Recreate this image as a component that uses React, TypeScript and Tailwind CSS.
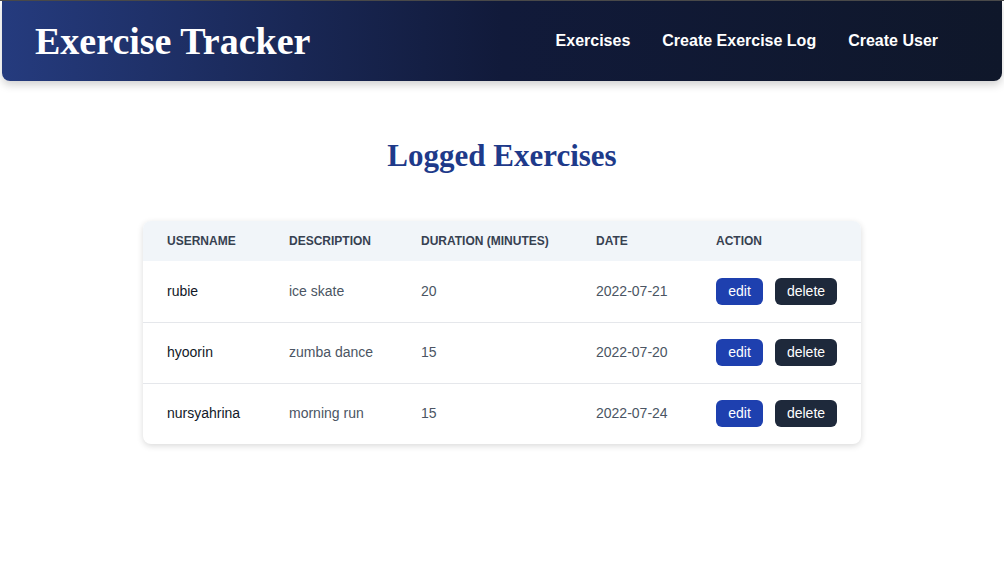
const exercises = [
  { username: "rubie", description: "ice skate", duration: 20, date: "2022-07-21" },
  { username: "hyoorin", description: "zumba dance", duration: 15, date: "2022-07-20" },
  { username: "nursyahrina", description: "morning run", duration: 15, date: "2022-07-24" },
];

const columns = [
  { label: "Username", w: "w-[122px]" },
  { label: "Description", w: "w-[132px]" },
  { label: "Duration (minutes)", w: "w-[175px]" },
  { label: "Date", w: "w-[120px]" },
  { label: "Action", w: "w-[169px]" },
];

const Navbar = () => (
  <nav className="mx-[2px] flex h-[80px] items-center justify-between rounded-b-lg bg-gradient-to-r from-[#253b7e] via-[#111a3a] to-[#0f172a] pl-[33px] pr-[64px] shadow-[0_4px_8px_rgba(0,0,0,0.18)]">
    <h1 className="text-[38px] font-bold leading-none text-white" style={{ fontFamily: "'Liberation Serif', serif" }}>
      Exercise Tracker
    </h1>
    <div className="flex items-center gap-8 text-[16px] font-bold text-white">
      <a href="#">Exercises</a>
      <a href="#">Create Exercise Log</a>
      <a href="#">Create User</a>
    </div>
  </nav>
);

export default function App() {
  return (
    <div className="min-h-screen bg-white" style={{ fontFamily: "'Liberation Sans', Arial, sans-serif" }}>
      <div className="h-px bg-[#4b4b4b]" />
      <Navbar />
      <main className="flex flex-col items-center pt-[59px]">
        <h2 className="text-[31px] font-bold leading-none text-[#1e3a8a]" style={{ fontFamily: "'Liberation Serif', serif" }}>
          Logged Exercises
        </h2>
        <div className="mt-[50px] w-[718px] overflow-hidden rounded-lg bg-white shadow-[0_2px_6px_rgba(0,0,0,0.15)]">
          <table className="w-full table-fixed border-collapse text-left">
            <thead className="bg-[#f1f5f9]">
              <tr className="h-[40px]">
                {columns.map((c) => (
                  <th key={c.label} className={`${c.w} pl-6 text-[12px] font-bold uppercase text-[#374151]`}>
                    {c.label}
                  </th>
                ))}
              </tr>
            </thead>
            <tbody>
              {exercises.map((ex, i) => (
                <tr key={ex.username} className={`h-[61px] ${i > 0 ? "border-t border-[#e5e7eb]" : ""}`}>
                  <td className="pl-6 text-[14px] text-[#111827]">{ex.username}</td>
                  <td className="pl-6 text-[14px] text-[#4b5563]">{ex.description}</td>
                  <td className="pl-6 text-[14px] text-[#4b5563]">{ex.duration}</td>
                  <td className="pl-6 text-[14px] text-[#4b5563]">{ex.date}</td>
                  <td className="pl-6">
                    <div className="flex gap-3">
                      <button className="h-[27px] w-[47px] rounded-md bg-[#1e40af] text-[14px] text-white">edit</button>
                      <button className="h-[27px] w-[62px] rounded-md bg-[#1e293b] text-[14px] text-white">delete</button>
                    </div>
                  </td>
                </tr>
              ))}
            </tbody>
          </table>
        </div>
      </main>
    </div>
  );
}
